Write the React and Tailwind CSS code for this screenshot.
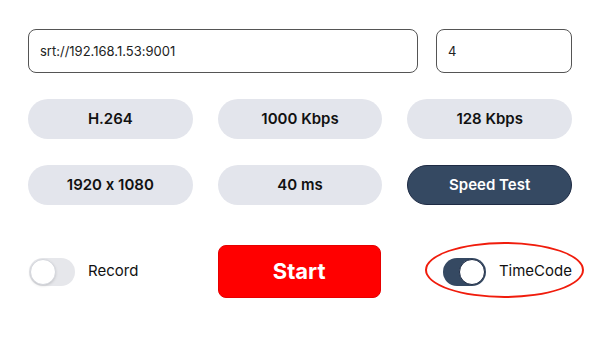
import React, { useState } from 'react';

const Pill = ({ children, dark }) => (
  <button
    className={
      dark
        ? 'h-10 rounded-full bg-[#354962] border border-[#1e2b44] text-white text-[15px] font-semibold'
        : 'h-10 rounded-full bg-[#e3e5ec] text-[#111] text-[15px] font-semibold'
    }
  >
    {children}
  </button>
);

const Toggle = ({ on, onClick }) => (
  <button
    onClick={onClick}
    className={
      'relative w-[46px] h-[28px] rounded-full flex items-center p-[1px] ' +
      (on ? 'bg-[#354962] justify-end' : 'bg-[#e6e7eb] justify-start')
    }
  >
    <span
      className={
        'block w-[26px] h-[26px] rounded-full bg-white border ' +
        (on ? 'border-[#1e2b44]' : 'border-[#d4d6dc] shadow-sm')
      }
    />
  </button>
);

export default function App() {
  const [record, setRecord] = useState(false);
  const [timecode, setTimecode] = useState(true);

  return (
    <div className="w-[600px] h-[338px] bg-white pt-[29px] px-[28px] font-['Inter',sans-serif] [font-feature-settings:'calt'_0]">
      {/* url + latency */}
      <div className="flex gap-[18px] w-[544px]">
        <input
          defaultValue="srt://192.168.1.53:9001"
          className="w-[390px] shrink-0 h-[44px] rounded-lg border border-[#555] px-[11px] text-[13px] text-[#222] outline-none"
        />
        <input
          defaultValue="4"
          className="flex-1 min-w-0 h-[44px] rounded-lg border border-[#555] px-[11px] text-[13px] text-[#222] outline-none"
        />
      </div>

      {/* settings */}
      <div className="grid grid-cols-3 gap-x-[25px] gap-y-[26px] mt-[26px] w-[544px]">
        <Pill>H.264</Pill>
        <Pill>1000 Kbps</Pill>
        <Pill>128 Kbps</Pill>
        <Pill>1920 x 1080</Pill>
        <Pill>40 ms</Pill>
        <Pill dark>Speed Test</Pill>
      </div>

      {/* controls */}
      <div className="grid grid-cols-3 gap-x-[25px] mt-[40px] w-[544px] items-center">
        <div className="flex items-center gap-[13px] pl-[1px]">
          <Toggle on={record} onClick={() => setRecord(!record)} />
          <span className="text-[15px] text-[#111]">Record</span>
        </div>
        <button className="h-[53px] w-[163px] rounded-lg bg-[#ff0000] border border-[#e60000] text-white text-[22px] font-bold">
          Start
        </button>
        <div className="relative flex items-center gap-[13px] pl-[36px]">
          <Toggle on={timecode} onClick={() => setTimecode(!timecode)} />
          <span className="text-[15px] text-[#111]">TimeCode</span>
          <div className="absolute left-[18px] top-[-16px] w-[159px] h-[56px] rounded-[50%] border-[2.5px] border-[#f01c0c] pointer-events-none" />
        </div>
      </div>
    </div>
  );
}
